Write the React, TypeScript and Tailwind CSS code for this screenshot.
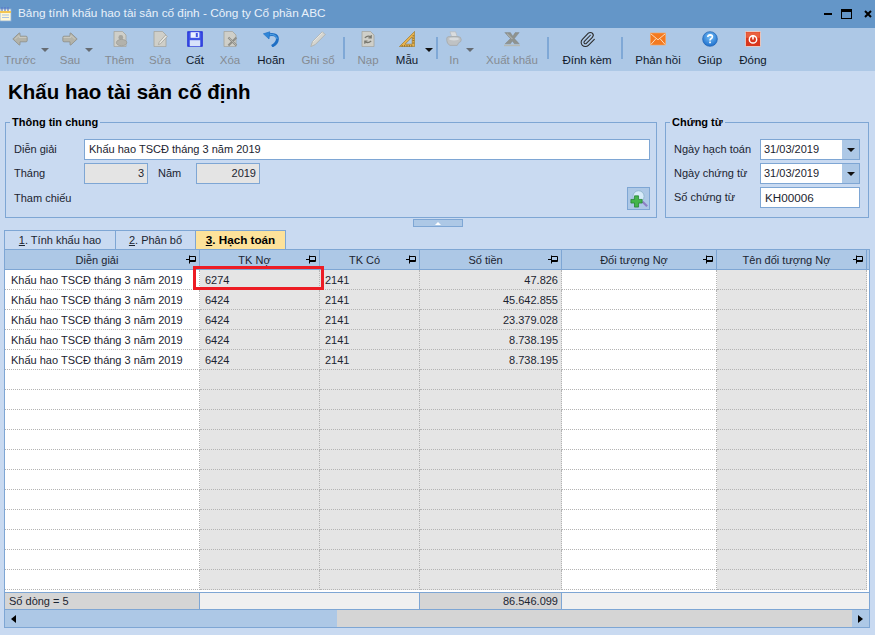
import React from 'react';
import { Paperclip } from 'lucide-react';

const PinIcon = () => (
  <svg width="10" height="9" viewBox="0 0 10 9" className="shrink-0">
    <path d="M0 4.5H3M3.5 .5V8.5M3.5 1.5H9.5V6.5H3.5M3.5 5.5H9.5" fill="none" stroke="#000" strokeWidth="1" />
  </svg>
);

const Caret = ({ dark }: { dark?: boolean }) => (
  <svg width="8" height="4" viewBox="0 0 8 4">
    <path d="M0 0H8L4 4Z" fill={dark ? '#111' : '#666c73'} />
  </svg>
);

const Arrow = ({ flip }: { flip?: boolean }) => (
  <svg width="16" height="16" viewBox="0 0 20 20" style={flip ? { transform: 'scaleX(-1)' } : undefined}>
    <path d="M1 10L9 2.5Q10 2 10 3.5V6.5H17.5Q19 6.5 19 8V12Q19 13.5 17.5 13.5H10V16.5Q10 18 9 17.5Z" fill="#b3b3a9" stroke="#8e8e86" />
    <path d="M4 10L9 5.5V8H18" fill="none" stroke="#d2d2ca" />
  </svg>
);

const DocBase = () => <path d="M2.5 .5H13L17.5 5V19.5H2.5Z" fill="#cfcfc9" stroke="#a3a39d" />;

const AddDoc = () => (
  <svg width="16" height="16" viewBox="0 0 20 20">
    <DocBase />
    <circle cx="11" cy="8" r="3" fill="#a5a59f" />
    <ellipse cx="12" cy="14.5" rx="6.5" ry="4" fill="#b2b2ac" stroke="#9b9b95" />
  </svg>
);

const EditDoc = () => (
  <svg width="16" height="16" viewBox="0 0 20 20">
    <DocBase />
    <path d="M9 14L17 5L19 7L10.5 16L8 17Z" fill="#e6e6e0" stroke="#a3a39d" />
  </svg>
);

const SaveIcon = () => (
  <svg width="16" height="16" viewBox="0 0 20 20">
    <rect x="1" y="1" width="18" height="18" fill="#3f55e6" stroke="#1620d8" strokeWidth="1.2" />
    <rect x="4.5" y="1.5" width="11" height="7" fill="#eaf0ff" />
    <rect x="11" y="2.5" width="2.5" height="5" fill="#3f55e6" />
    <rect x="3.5" y="11.5" width="13" height="7.5" fill="#d8e2fa" />
  </svg>
);

const DeleteDoc = () => (
  <svg width="16" height="16" viewBox="0 0 20 20">
    <DocBase />
    <path d="M8 8L18 18M18 8L8 18" stroke="#8f8f89" strokeWidth="2.6" />
    <path d="M8.5 8.5L17.5 17.5" stroke="#c9c9c3" strokeWidth=".8" />
  </svg>
);

const UndoIcon = () => (
  <svg width="16" height="16" viewBox="0 0 20 20">
    <path d="M5 6C12 2.5 18.5 5 18 10.5C17.7 14 15 17 11 19" fill="none" stroke="#1f6fc4" strokeWidth="3.6" />
    <path d="M6 5.5C12 3 17.5 5.5 17.5 10" fill="none" stroke="#5fb0ec" strokeWidth="1.2" />
    <path d="M.5 3.5L8.5 1L7.5 10Z" fill="#2f86d8" stroke="#1f6fc4" strokeWidth=".8" />
  </svg>
);

const PencilIcon = () => (
  <svg width="16" height="16" viewBox="0 0 20 20">
    <path d="M1 19.5L3 13.5L15.5 1L19 4.5L6.5 17Z" fill="#d6d6d0" stroke="#aeaea8" />
    <path d="M4 13.5L15.5 2" stroke="#eeeeea" />
  </svg>
);

const ReloadDoc = () => (
  <svg width="16" height="16" viewBox="0 0 20 20">
    <DocBase />
    <path d="M6 8.5Q10 4.5 14 8M14 5V8.5H10.5M14 12.5Q10 16 6 13M6 16V12.5H9.5" fill="none" stroke="#77776f" strokeWidth="1.5" />
  </svg>
);

const RulerIcon = () => (
  <svg width="16" height="16" viewBox="0 0 20 20">
    <path fillRule="evenodd" d="M.5 19.5L19.5 .5V19.5ZM7.5 16.5H16.5V7.5Z" fill="#e9b24c" stroke="#9a7426" strokeWidth=".8" />
    <path d="M4 19.5V17.5M7 19.5V17.5M10 19.5V17.5M13 19.5V17.5M16 19.5V17.5M19 15H17M19 12H17M19 9H17M19 6H17" stroke="#6e5218" strokeWidth=".9" />
  </svg>
);

const PrinterIcon = () => (
  <svg width="16" height="16" viewBox="0 0 20 20">
    <path d="M5 1H12L14 7H7Z" fill="#d9dcde" stroke="#b4b7b9" strokeWidth=".8" />
    <path d="M1 9Q1 7 4 7H15Q19 7 19 11Q19 14 16 14.5L14 18H5Q1 16 1 12Z" fill="#bfc2c4" stroke="#a5a8aa" />
    <ellipse cx="10" cy="10" rx="6" ry="1.8" fill="#d8dbdd" />
  </svg>
);

const ExcelIcon = () => (
  <svg width="16" height="16" viewBox="0 0 20 20">
    <path d="M1 2H8L11 6.5L14 2H19L13 9.5L19 16H13L10.5 12.5L8 16H1.5L8 9.5Z" fill="#8f938f" stroke="#7b7f7b" strokeWidth=".5" />
    <path d="M0 17H20V19H0Z" fill="#b5b9b5" />
    <path d="M4 3.5L10.5 10" stroke="#c4c8c4" />
  </svg>
);

const MailIcon = () => (
  <svg width="16" height="16" viewBox="0 0 20 20">
    <rect x=".5" y="2.5" width="19" height="15" fill="#f47a20" stroke="#f9a860" strokeWidth=".8" />
    <path d="M1 3.5L10 11L19 3.5M1 17L7.5 9.5M19 17L12.5 9.5" fill="none" stroke="#fde0c0" strokeWidth="1.2" />
  </svg>
);

const HelpIcon = () => (
  <svg width="16" height="16" viewBox="0 0 20 20">
    <defs>
      <radialGradient id="helpFill" cx="50%" cy="35%" r="70%">
        <stop offset="0%" stopColor="#79c1f7" />
        <stop offset="100%" stopColor="#1467c9" />
      </radialGradient>
    </defs>
    <circle cx="10" cy="10" r="9.2" fill="url(#helpFill)" stroke="#1a5dad" strokeWidth=".8" />
    <path d="M7.2 7.5Q7.5 4.8 10.2 4.8Q13 4.9 13 7.3Q13 8.8 11.3 9.7Q10 10.4 10 12" fill="none" stroke="#fff" strokeWidth="2" />
    <rect x="9" y="13.2" width="2.1" height="2.1" fill="#fff" />
  </svg>
);

const PowerIcon = () => (
  <svg width="16" height="16" viewBox="0 0 20 20">
    <rect x=".5" y=".5" width="19" height="19" rx="1" fill="#d9361c" stroke="#f4e4dc" />
    <rect x="1.5" y="1.5" width="17" height="7" fill="#e9603f" />
    <circle cx="10" cy="10.5" r="4.6" fill="none" stroke="#fff" strokeWidth="1.8" />
    <path d="M10 5V10.5" stroke="#fff" strokeWidth="2" />
  </svg>
);

const ZoomAddIcon = () => (
  <svg width="18" height="18" viewBox="0 0 20 20">
    <circle cx="9.5" cy="7" r="6.2" fill="#d6ebf9" stroke="#8fb6cc" />
    <path d="M14 13L19 18" stroke="#8d7fc4" strokeWidth="2.4" />
    <path d="M5 6.5H9.5V10.5H13.5V14.5H9.5V19H5V14.5H1V10.5H5Z" fill="#43b54a" stroke="#1f7d2c" strokeWidth=".8" />
  </svg>
);

const NoteIcon = () => (
  <svg width="14" height="16" viewBox="0 0 14 16" className="shrink-0">
    <rect x="0" y="3" width="11" height="12" fill="#fff8d8" stroke="#8fb0d8" strokeWidth=".8" />
    <rect x="0" y="5" width="11" height="2" fill="#f2c653" />
    <path d="M2 1V5M5 1V5M8 1V5" stroke="#5a78c8" strokeWidth="1.2" />
    <path d="M2 9H9M2 11.5H9" stroke="#a9c3e4" />
  </svg>
);

type ToolItem =
  | { kind: 'btn'; label: string; w: number; ml: number; on?: boolean; icon: React.ReactNode }
  | { kind: 'caret'; ml: number; dark?: boolean }
  | { kind: 'sep'; ml: number };

const toolbar: ToolItem[] = [
  { kind: 'btn', label: 'Trước', w: 34, ml: 3, icon: <Arrow /> },
  { kind: 'caret', ml: 4 },
  { kind: 'btn', label: 'Sau', w: 30, ml: 6, icon: <Arrow flip /> },
  { kind: 'caret', ml: 0 },
  { kind: 'btn', label: 'Thêm', w: 31, ml: 11, icon: <AddDoc /> },
  { kind: 'btn', label: 'Sửa', w: 24, ml: 13, icon: <EditDoc /> },
  { kind: 'btn', label: 'Cất', w: 20, ml: 13, on: true, icon: <SaveIcon /> },
  { kind: 'btn', label: 'Xóa', w: 22, ml: 14, icon: <DeleteDoc /> },
  { kind: 'btn', label: 'Hoãn', w: 30, ml: 15, on: true, icon: <UndoIcon /> },
  { kind: 'btn', label: 'Ghi sổ', w: 36, ml: 14, icon: <PencilIcon /> },
  { kind: 'sep', ml: 7 },
  { kind: 'btn', label: 'Nạp', w: 26, ml: 10, icon: <ReloadDoc /> },
  { kind: 'btn', label: 'Mẫu', w: 26, ml: 13, on: true, icon: <RulerIcon /> },
  { kind: 'caret', ml: 5, dark: true },
  { kind: 'sep', ml: 3 },
  { kind: 'btn', label: 'In', w: 12, ml: 10, icon: <PrinterIcon /> },
  { kind: 'caret', ml: 6 },
  { kind: 'btn', label: 'Xuất khẩu', w: 54, ml: 11, icon: <ExcelIcon /> },
  { kind: 'sep', ml: 8 },
  { kind: 'btn', label: 'Đính kèm', w: 52, ml: 12, on: true, icon: <Paperclip size={17} strokeWidth={1.5} color="#2a2a2a" /> },
  { kind: 'sep', ml: 8 },
  { kind: 'btn', label: 'Phản hồi', w: 48, ml: 11, on: true, icon: <MailIcon /> },
  { kind: 'btn', label: 'Giúp', w: 26, ml: 15, on: true, icon: <HelpIcon /> },
  { kind: 'btn', label: 'Đóng', w: 30, ml: 15, on: true, icon: <PowerIcon /> },
];

const columns = [
  { title: 'Diễn giải', w: 'w-[195px]', grey: false },
  { title: 'TK Nợ', w: 'w-[120px]', grey: true },
  { title: 'TK Có', w: 'w-[100px]', grey: true },
  { title: 'Số tiền', w: 'w-[142px]', grey: true },
  { title: 'Đối tượng Nợ', w: 'w-[155px]', grey: false },
  { title: 'Tên đối tượng Nợ', w: 'w-[150px]', grey: true },
];

const desc = 'Khấu hao TSCĐ tháng 3 năm 2019';
const rows = [
  [desc, '6274', '2141', '47.826'],
  [desc, '6424', '2141', '45.642.855'],
  [desc, '6424', '2141', '23.379.028'],
  [desc, '6424', '2141', '8.738.195'],
  [desc, '6424', '2141', '8.738.195'],
];

const App = () => {
  const gridRows = Array.from({ length: 16 }, (_, i) => rows[i] || ['', '', '', '']);

  return (
    <div className="w-[875px] h-[635px] bg-[#c9daf1] flex flex-col overflow-hidden text-[11px] text-[#1b2430] font-['Liberation_Sans',sans-serif]">
      {/* title bar */}
      <div className="h-[28px] bg-[#6496c8] flex items-center shrink-0">
        <NoteIcon />
        <span className="ml-[4px] text-[11.8px] text-[#e9f1fa]">Bảng tính khấu hao tài sản cố định - Công ty Cổ phần ABC</span>
        <div className="ml-auto flex items-center">
          <div className="w-[8px] h-[2px] bg-black" />
          <div className="ml-[9px] w-[11px] h-[10px] border border-black border-t-[3px]" />
          <svg width="8" height="8" viewBox="0 0 8 8" className="ml-[12px] mr-[3px]">
            <path d="M1 1L7 7M7 1L1 7" stroke="#000" strokeWidth="2" />
          </svg>
        </div>
      </div>

      {/* toolbar */}
      <div className="h-[43px] bg-[#adc8e6] flex shrink-0">
        {toolbar.map((item, i) => {
          if (item.kind === 'caret') {
            return (
              <div key={i} className="w-[8px] pt-[20px] leading-[0px]" style={{ marginLeft: item.ml }}>
                <Caret dark={item.dark} />
              </div>
            );
          }
          if (item.kind === 'sep') {
            return <div key={i} className="w-[2px] h-[22px] mt-[9px] bg-[#7fa8d6]" style={{ marginLeft: item.ml }} />;
          }
          return (
            <div
              key={i}
              className="flex flex-col items-center pt-[1px]"
              style={{ marginLeft: item.ml, width: item.w }}
            >
              <div className="h-[20px] w-[20px] flex items-center justify-center">{item.icon}</div>
              <span className={`mt-[3px] text-[11.5px] leading-[16px] whitespace-nowrap ${item.on ? 'text-[#10182a]' : 'text-[#858b92]'}`}>{item.label}</span>
            </div>
          );
        })}
      </div>

      <div className="h-[43px] pl-[8px] flex items-center shrink-0">
        <h1 className="text-[20.5px] font-bold text-black">Khấu hao tài sản cố định</h1>
      </div>

      {/* info groups */}
      <div className="flex pl-[5px] gap-[8px] h-[104px] shrink-0">
        <fieldset className="w-[652px] border border-[#7ea6d4] pl-[8px] pr-[6px]">
          <legend className="ml-[-4px] px-[2px] font-bold leading-[16px] text-black">Thông tin chung</legend>
          <div className="flex flex-col gap-[3px] pt-[9px]">
            <div className="flex items-center h-[21px]">
              <span className="w-[70px]">Diễn giải</span>
              <div className="flex-1 h-[21px] bg-white border border-[#7ea6d4] pl-[4px] leading-[19px]">{desc}</div>
            </div>
            <div className="flex items-center h-[21px]">
              <span className="w-[70px]">Tháng</span>
              <div className="w-[64px] h-[21px] bg-[#e4e4e4] border border-[#7ea6d4] pr-[3px] text-right leading-[19px]">3</div>
              <span className="w-[48px] pl-[10px]">Năm</span>
              <div className="w-[64px] h-[21px] bg-[#e4e4e4] border border-[#7ea6d4] pr-[3px] text-right leading-[19px]">2019</div>
            </div>
            <div className="flex items-center justify-between h-[23px]">
              <span>Tham chiếu</span>
              <div className="w-[23px] h-[23px] bg-[#adc8e6] border border-[#7ea6d4] flex items-center justify-center">
                <ZoomAddIcon />
              </div>
            </div>
          </div>
        </fieldset>
        <fieldset className="w-[204px] border border-[#7ea6d4] pl-[8px]">
          <legend className="ml-[-4px] px-[2px] font-bold leading-[16px] text-black">Chứng từ</legend>
          <div className="flex flex-col gap-[3px] pt-[9px]">
            {['Ngày hạch toán', 'Ngày chứng từ'].map((label) => (
              <div key={label} className="flex items-center h-[21px]">
                <span className="w-[86px]">{label}</span>
                <div className="w-[100px] h-[21px] bg-white border border-[#7ea6d4] flex">
                  <span className="flex-1 pl-[3px] leading-[19px]">31/03/2019</span>
                  <div className="w-[17px] bg-[#adc8e6] flex items-center justify-center">
                    <Caret dark />
                  </div>
                </div>
              </div>
            ))}
            <div className="flex items-center h-[21px]">
              <span className="w-[86px]">Số chứng từ</span>
              <div className="w-[100px] h-[21px] bg-white border border-[#7ea6d4] pl-[4px] text-[11.7px] leading-[19px]">KH00006</div>
            </div>
          </div>
        </fieldset>
      </div>

      {/* splitter */}
      <div className="w-[50px] h-[8px] mt-[1px] self-center bg-[#adc8e6] border border-[#7ea6d4] flex items-center justify-center shrink-0">
        <svg width="6" height="3" viewBox="0 0 6 3">
          <path d="M0 3H6L3 0Z" fill="#fff" />
        </svg>
      </div>

      {/* tabs */}
      <div className="h-[19px] mt-[3px] ml-[4px] flex shrink-0">
        <div className="w-[112px] border border-b-0 border-[#7ea6d4] flex items-center justify-center">
          <span><u>1</u>. Tính khấu hao</span>
        </div>
        <div className="w-[80px] border-t border-r border-[#7ea6d4] flex items-center justify-center">
          <span><u>2</u>. Phân bổ</span>
        </div>
        <div className="w-[90px] border-t border-r border-[#7ea6d4] bg-[#fde29a] flex items-center justify-center text-[11.7px] font-bold text-black">
          <span><u>3</u>. Hạch toán</span>
        </div>
      </div>

      {/* grid */}
      <div className="ml-[4px] w-[866px] border border-[#7ea6d4] relative shrink-0 bg-white">
        <div className="flex h-[20px] bg-[#adc8e6] border-b border-[#7ea6d4]">
          {columns.map((c) => (
            <div key={c.title} className={`${c.w} relative flex items-center justify-center border-r border-[#7ea6d4] pr-[10px] leading-[20px]`}>
              <span className="pt-[1px]">{c.title}</span>
              <div className="absolute right-[3px] top-[5px] leading-[0px]">
                <PinIcon />
              </div>
            </div>
          ))}
        </div>

        {gridRows.map((r, i) => (
          <div key={i} className="flex h-[20px]">
            {columns.map((c, j) => (
              <div
                key={c.title}
                className={`${c.w} h-[20px] border-r border-b border-dotted border-[#b4b4b4] leading-[20px] truncate ${c.grey ? 'bg-[#e5e5e5]' : 'bg-white'} ${j === 3 ? 'text-right pr-[3px]' : j === 0 ? 'pl-[6px]' : 'pl-[5px]'}`}
              >
                {r[j]}
              </div>
            ))}
          </div>
        ))}
        <div className="h-[2px]" />

        {/* summary */}
        <div className="flex h-[18px] border-y border-[#7ea6d4] bg-[#f0f0f0]">
          <div className="w-[195px] bg-[#d5d5d5] border-r border-[#7ea6d4] pl-[4px] leading-[16px]">Số dòng = 5</div>
          <div className="w-[220px] border-r border-[#7ea6d4]" />
          <div className="w-[142px] bg-[#d5d5d5] border-r border-[#7ea6d4] pr-[3px] text-right leading-[16px]">86.546.099</div>
        </div>

        {/* scrollbar */}
        <div className="flex h-[17px] bg-[#d5d5d5]">
          <div className="w-[332px] bg-[#adc8e6] pl-[6px] flex items-center">
            <svg width="5" height="8" viewBox="0 0 5 8">
              <path d="M5 0V8L0 4Z" fill="#000" />
            </svg>
          </div>
          <div className="ml-auto w-[17px] bg-[#adc8e6] flex items-center justify-center">
            <svg width="5" height="8" viewBox="0 0 5 8">
              <path d="M0 0V8L5 4Z" fill="#000" />
            </svg>
          </div>
        </div>

        {/* highlight drawn over the first TK Nợ cell */}
        <div className="absolute left-[188px] top-[16px] w-[131px] h-[24px] border-[3px] border-[#ed1c24]" />
      </div>
    </div>
  );
};

export default App;
